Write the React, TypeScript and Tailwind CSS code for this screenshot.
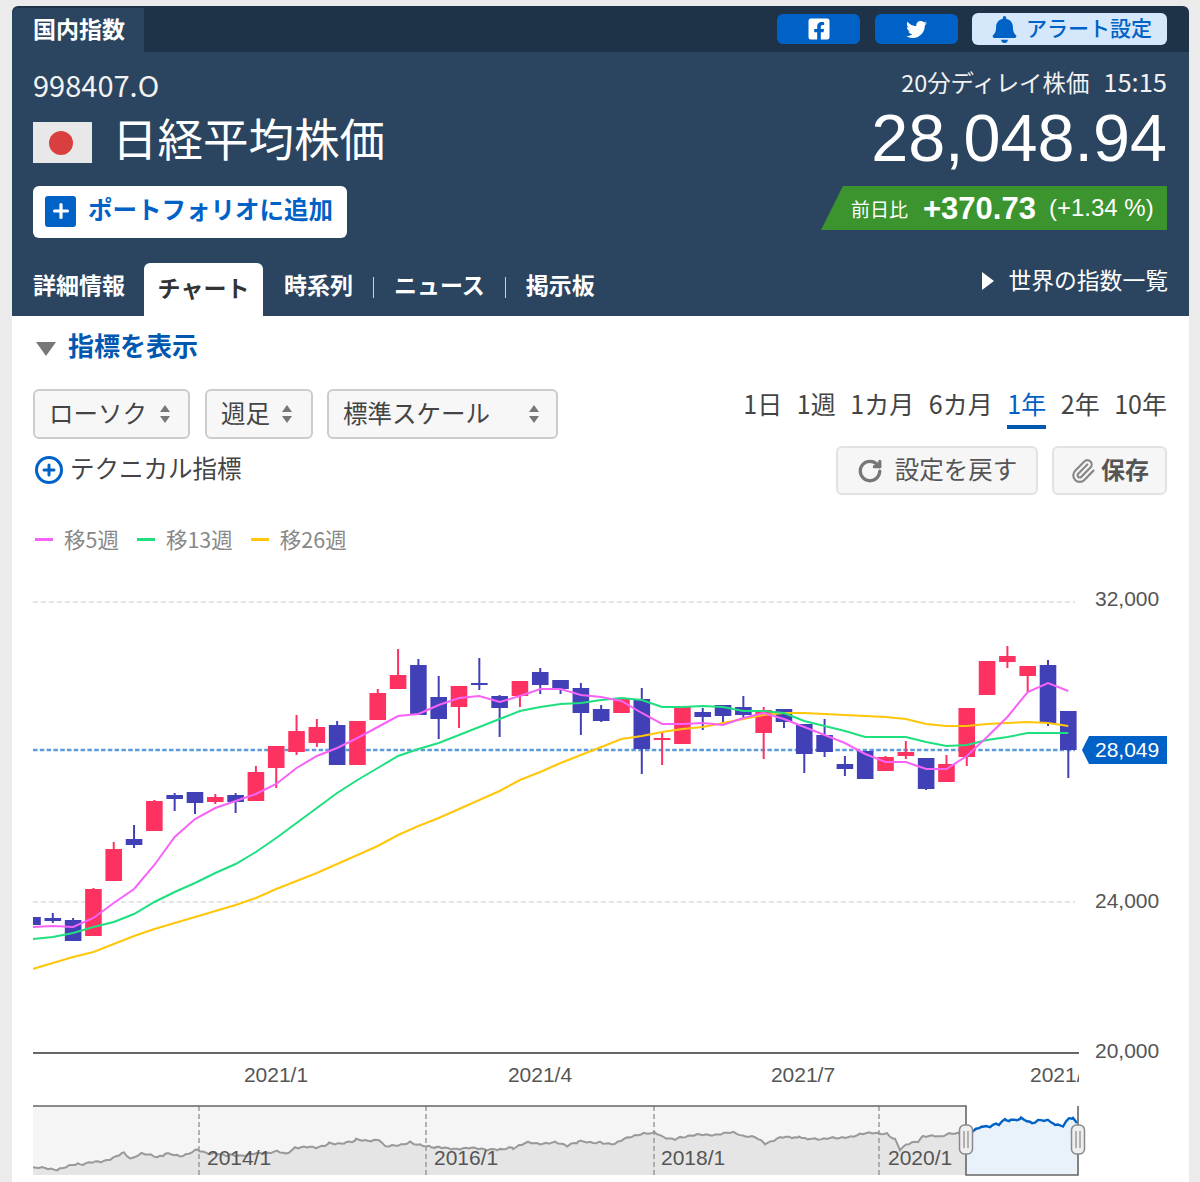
import { CirclePlus, Paperclip, Plus, RotateCw } from "lucide-react";
import { FaBell, FaFacebookSquare, FaTwitter } from "react-icons/fa";

const RED = "#fe3260";
const BLUE = "#4240b6";

// [high, body top, body bottom, low, rising]
const candles: [number, number, number, number, boolean][] = [
	[917, 917, 925, 925, false],
	[913, 918, 921, 923, false],
	[918, 920, 941, 941, false],
	[888, 889, 936, 936, true],
	[842, 849, 881, 881, true],
	[825, 839, 845, 848, false],
	[800, 801, 831, 831, true],
	[793, 795, 799, 811, false],
	[792, 792, 803, 814, false],
	[794, 797, 802, 804, true],
	[793, 795, 802, 813, false],
	[766, 772, 801, 801, true],
	[746, 746, 768, 788, true],
	[715, 731, 752, 755, true],
	[719, 727, 743, 747, true],
	[721, 725, 765, 765, false],
	[721, 721, 765, 765, true],
	[689, 693, 720, 720, true],
	[649, 675, 689, 689, true],
	[659, 665, 715, 715, false],
	[676, 697, 719, 739, false],
	[686, 686, 707, 728, true],
	[658, 683, 685, 690, false],
	[695, 696, 708, 737, false],
	[681, 681, 696, 707, true],
	[668, 672, 685, 694, false],
	[680, 680, 689, 694, false],
	[683, 688, 713, 735, false],
	[705, 709, 721, 722, false],
	[699, 699, 713, 713, true],
	[688, 699, 749, 774, false],
	[733, 738, 740, 765, true],
	[707, 707, 744, 744, true],
	[708, 712, 717, 730, false],
	[705, 705, 716, 722, false],
	[696, 707, 715, 718, false],
	[707, 710, 733, 759, true],
	[709, 709, 722, 728, false],
	[724, 724, 754, 773, false],
	[719, 735, 752, 757, false],
	[756, 764, 769, 776, false],
	[751, 751, 779, 779, false],
	[756, 757, 771, 771, true],
	[741, 752, 756, 759, true],
	[758, 758, 789, 790, false],
	[755, 764, 782, 782, true],
	[708, 708, 757, 766, true],
	[661, 661, 695, 695, true],
	[646, 656, 662, 668, true],
	[666, 666, 676, 692, true],
	[660, 665, 723, 726, false],
	[711, 711, 750, 778, false],
];

const ma5 = [927, 926, 927, 918, 903, 889, 865, 837, 819, 808, 801, 794, 784, 768, 756, 748, 738, 727, 716, 714, 705, 698, 696, 702, 696, 689, 689, 695, 697, 701, 713, 724, 724, 723, 725, 718, 713, 719, 727, 735, 743, 754, 762, 762, 769, 769, 756, 737, 717, 692, 683, 691];
const ma13 = [939, 937, 933, 927, 922, 914, 902, 892, 883, 873, 864, 852, 838, 823, 808, 793, 780, 768, 756, 749, 743, 735, 727, 719, 711, 707, 704, 703, 700, 698, 700, 707, 707, 706, 707, 711, 711, 713, 721, 726, 731, 737, 737, 737, 742, 746, 745, 740, 737, 733, 733, 733];
const ma26 = [969, 963, 957, 952, 944, 936, 929, 923, 917, 911, 905, 898, 889, 881, 873, 864, 855, 846, 835, 826, 818, 809, 800, 791, 780, 772, 763, 755, 747, 739, 736, 732, 729, 727, 723, 719, 715, 713, 713, 714, 715, 716, 717, 719, 724, 726, 726, 724, 723, 722, 723, 726];

const candleX = (i: number) => 32.5 + i * 20.31;
const linePoints = (values: number[]) =>
	values.map((y, i) => `${candleX(i)},${y}`).join(" ");

const navGrayBase: [number, number][] = [
	[33, 1168], [57, 1169], [80, 1164], [101, 1162], [124, 1153], [132, 1159], [142, 1154], [157, 1157],
	[165, 1154], [180, 1156], [197, 1150], [214, 1154], [230, 1155], [245, 1155], [268, 1153], [277, 1152],
	[286, 1154], [295, 1147], [316, 1148], [329, 1143], [346, 1143], [356, 1140], [379, 1140], [386, 1147],
	[411, 1142], [426, 1147], [436, 1148], [497, 1149], [513, 1148], [528, 1143], [555, 1143], [568, 1146],
	[578, 1142], [600, 1142], [615, 1144], [632, 1136], [654, 1133], [663, 1137], [677, 1139], [688, 1136],
	[734, 1133], [743, 1137], [755, 1136], [765, 1143], [780, 1138], [799, 1137], [809, 1139], [830, 1138],
	[839, 1139], [860, 1134], [887, 1133], [895, 1140], [900, 1149], [906, 1145], [918, 1142], [923, 1136],
	[941, 1137], [946, 1134], [960, 1134], [967, 1133],
];
const navBlueBase: [number, number][] = [
	[967, 1133], [973, 1130], [983, 1126], [990, 1126], [996, 1123], [999, 1124], [1006, 1119], [1011, 1121],
	[1021, 1119], [1032, 1123], [1038, 1121], [1048, 1121], [1055, 1125], [1063, 1126], [1069, 1117], [1073, 1118],
	[1077, 1123],
];

// the long range line is noisy, add some wobble between the traced points
const roughen = (pts: [number, number][]) => {
	const out: [number, number][] = [];
	for (let i = 0; i < pts.length - 1; i++) {
		const [x0, y0] = pts[i];
		const [x1, y1] = pts[i + 1];
		for (let x = x0; x < x1; x += 3) {
			const y = y0 + ((y1 - y0) * (x - x0)) / (x1 - x0);
			out.push([x, y + Math.sin(x * 1.9) * 0.8 + Math.sin(x * 0.7) * 0.7]);
		}
	}
	out.push(pts[pts.length - 1]);
	return out;
};
const navGray = roughen(navGrayBase);
const navBlue = roughen(navBlueBase);
const toPoints = (pts: [number, number][]) => pts.map(([x, y]) => `${x},${y}`).join(" ");

function Stepper() {
	return (
		<svg width="12" height="20" viewBox="0 0 12 20" className="shrink-0">
			<path d="M6 1 L11 8 H1 Z M6 19 L11 12 H1 Z" fill="#777" />
		</svg>
	);
}

function SelectBox({ label, className }: { label: string; className: string }) {
	return (
		<div
			className={`flex h-[50px] items-center justify-between rounded-md border-2 border-[#ccc] bg-[#f7f7f7] pl-[14px] text-[24.5px] leading-none text-[#444] ${className}`}
		>
			<span className="pb-[1px]">{label}</span>
			<Stepper />
		</div>
	);
}

function Legend({ color, label }: { color: string; label: string }) {
	return (
		<div className="flex items-center gap-[11px]">
			<span className="h-[3px] w-[18px]" style={{ backgroundColor: color }} />
			<span>{label}</span>
		</div>
	);
}

function Handle({ x }: { x: number }) {
	return (
		<g>
			<rect x={x - 6.5} y={1125} width={13} height={29} rx={5} fill="#eee" stroke="#8a8a8a" strokeWidth={1.5} />
			<path d={`M${x - 2} 1131 V1148 M${x + 2} 1131 V1148`} stroke="#8a8a8a" strokeWidth={1.2} />
		</g>
	);
}

function Chart() {
	const axisText = "#555";
	return (
		<svg width="1177" height="617" viewBox="12 565 1177 617" className="block" fontFamily="'Liberation Sans', sans-serif">
			<defs>
				<clipPath id="plot">
					<rect x="33" y="565" width="1046" height="540" />
				</clipPath>
			</defs>

			<path d="M33 602 H1075 M33 902 H1075" stroke="#ddd" strokeWidth="1.6" strokeDasharray="5 3" />
			<path d="M33 750 H1075" stroke="#5b9bdc" strokeWidth="2.4" strokeDasharray="4.5 2.3" />

			<g clipPath="url(#plot)">
				{candles.map(([high, top, bottom, low, rising], i) => {
					const x = candleX(i);
					const color = rising ? RED : BLUE;
					return (
						<g key={i}>
							<path d={`M${x} ${high} V${low}`} stroke={color} strokeWidth="2" />
							<rect x={x - 8.3} y={top} width="16.6" height={bottom - top} fill={color} />
						</g>
					);
				})}
				<polyline points={linePoints(ma26)} fill="none" stroke="#ffc60a" strokeWidth="2" />
				<polyline points={linePoints(ma13)} fill="none" stroke="#1ee07f" strokeWidth="2" />
				<polyline points={linePoints(ma5)} fill="none" stroke="#f763f7" strokeWidth="2" />
				<text x="1030" y="1082" fontSize="21" fill={axisText}>2021/10</text>
			</g>

			<path d="M33 1053 H1079" stroke="#666" strokeWidth="2" />

			<text x="1095" y="606" fontSize="21" fill={axisText}>32,000</text>
			<text x="1095" y="908" fontSize="21" fill={axisText}>24,000</text>
			<text x="1095" y="1058" fontSize="21" fill={axisText}>20,000</text>

			<path d="M1082 750 L1089 736 H1167 V764 H1089 Z" fill="#0062c7" />
			<text x="1095" y="757" fontSize="21" fill="#fff">28,049</text>

			<text x="276" y="1082" fontSize="21" fill={axisText} textAnchor="middle">2021/1</text>
			<text x="540" y="1082" fontSize="21" fill={axisText} textAnchor="middle">2021/4</text>
			<text x="803" y="1082" fontSize="21" fill={axisText} textAnchor="middle">2021/7</text>

			{/* navigator */}
			<rect x="33" y="1106" width="933" height="69" fill="#f5f5f5" />
			<polygon points={`33,1175 ${toPoints(navGray)} 967,1175`} fill="#e5e5e5" />
			<rect x="966" y="1106" width="112" height="69" fill="#fff" />
			<polygon points={`967,1175 ${toPoints(navBlue)} 1078,1175`} fill="#e9f2fb" />
			<path d="M199 1106 V1175 M426 1106 V1175 M654 1106 V1175 M879 1106 V1175" stroke="#888" strokeWidth="1.2" strokeDasharray="5 3" />
			<polyline points={toPoints(navGray)} fill="none" stroke="#999" strokeWidth="2" />
			<polyline points={toPoints(navBlue)} fill="none" stroke="#0062c7" strokeWidth="2.4" />
			<path d="M33 1106 H966 V1175 H1078 V1106" fill="none" stroke="#666" strokeWidth="1.6" />
			<text x="207" y="1165" fontSize="21" fill={axisText}>2014/1</text>
			<text x="434" y="1165" fontSize="21" fill={axisText}>2016/1</text>
			<text x="661" y="1165" fontSize="21" fill={axisText}>2018/1</text>
			<text x="888" y="1165" fontSize="21" fill={axisText}>2020/1</text>
			<Handle x={966} />
			<Handle x={1078} />
		</svg>
	);
}

export default function App() {
	return (
		<div className="h-[1182px] overflow-hidden bg-[#ebebeb] pt-[6px] pl-[12px] font-['Noto_Sans_CJK_JP','Noto_Sans',sans-serif]">
			<div className="w-[1177px] overflow-hidden rounded-t-md bg-white">
				{/* top strip */}
				<div className="flex h-[46px] justify-between bg-[#1e3248] pr-[22px]">
					<div className="mt-[2px] flex w-[132px] items-center rounded-tl-md bg-[#2b4560] pb-[4px] pl-[21px] text-[23px] leading-none font-bold text-white">
						国内指数
					</div>
					<div className="flex items-center">
						<button className="flex h-[30px] w-[83px] items-center justify-center rounded-md bg-[#0062c7] text-white">
							<FaFacebookSquare size={24} />
						</button>
						<button className="ml-[15px] flex h-[30px] w-[83px] items-center justify-center rounded-md bg-[#0062c7] text-white">
							<FaTwitter size={21} />
						</button>
						<button className="ml-[14px] flex h-[32px] w-[195px] items-center gap-[8px] rounded-md bg-[#d5e8fb] pl-[19px] text-[21px] leading-none font-medium text-[#0062c7]">
							<FaBell size={27} />
							<span className="pb-[4px]">アラート設定</span>
						</button>
					</div>
				</div>

				{/* symbol panel */}
				<div className="h-[264px] bg-[#2b4560] text-white">
					<div className="flex h-[211px] justify-between pr-[22px] pl-[21px]">
						<div>
							<div className="pt-[17px] text-[29px] leading-[30px] text-[#f2f2f2]">998407.O</div>
							<div className="mt-[16px] flex h-[50px] items-start gap-[20px]">
								<div className="mt-[7px] flex h-[41px] w-[59px] items-center justify-center bg-[#e8e8e8] pr-[3px]">
									<span className="h-[24px] w-[24px] rounded-full bg-[#d93f3f]" />
								</div>
								<h1 className="-mt-[3px] text-[45.5px] leading-[50px] font-normal">日経平均株価</h1>
							</div>
							<button className="mt-[21px] flex h-[52px] w-[314px] items-center gap-[12px] rounded-md bg-white pl-[12px] text-[24.5px] leading-none font-bold text-[#0062c7]">
								<span className="mb-[2px] flex h-[31px] w-[31px] items-center justify-center rounded-[3px] bg-[#0062c7] text-white">
									<Plus size={22} strokeWidth={3.5} />
								</span>
								<span className="pb-[6px]">ポートフォリオに追加</span>
							</button>
						</div>
						<div className="flex flex-col items-end">
							<div className="flex items-baseline gap-[14px] pt-[14px] text-[23.4px] leading-[30px] text-[#f2f2f2]">
								<span>20分ディレイ株価</span>
								<span className="text-[25.5px]">15:15</span>
							</div>
							<div className="mt-[6px] font-['Liberation_Sans',sans-serif] text-[66.5px] leading-[70px]">28,048.94</div>
							<div className="mt-[13px] flex h-[44px] w-[346px] items-center bg-[#3b942d] pl-[30px] [clip-path:polygon(22px_0,100%_0,100%_100%,0_100%)]">
								<span className="text-[19px] leading-none">前日比</span>
								<span className="ml-[15px] font-['Liberation_Sans',sans-serif] text-[31px] leading-none font-bold">+370.73</span>
								<span className="ml-[13px] font-['Liberation_Sans',sans-serif] text-[24px] leading-none">(+1.34 %)</span>
							</div>
						</div>
					</div>
					<div className="flex h-[53px] items-end justify-between pr-[21px] pl-[21px]">
						<div className="flex h-[53px] items-center text-[23px] leading-none font-bold">
							<span className="pb-[11px]">詳細情報</span>
							<span className="ml-[19px] flex h-[53px] w-[119px] items-center justify-center rounded-t-md bg-white pb-[5px] text-[#333]">チャート</span>
							<span className="ml-[21px] pb-[11px]">時系列</span>
							<span className="mx-[20px] mb-[4px] h-[21px] w-px bg-[#ccd]" />
							<span className="pb-[11px]">ニュース</span>
							<span className="mx-[20px] mb-[4px] h-[21px] w-px bg-[#ccd]" />
							<span className="pb-[11px]">掲示板</span>
						</div>
						<div className="flex h-[46px] items-start gap-[14px] text-[22.8px] leading-none">
							<svg width="12" height="18" viewBox="0 0 12 18" className="mt-[2px]">
								<path d="M0 0 L12 9 L0 18 Z" fill="#fff" />
							</svg>
							<span className="-mt-[1px]">世界の指数一覧</span>
						</div>
					</div>
				</div>

				{/* controls */}
				<div className="pt-[12px]">
					<div className="flex items-center gap-[12px] pl-[24px]">
						<svg width="20" height="14" viewBox="0 0 20 14" className="mt-[3px]">
							<path d="M0 0 H20 L10 14 Z" fill="#777" />
						</svg>
						<span className="mb-[4px] text-[26px] leading-[34px] font-bold text-[#0058b0]">指標を表示</span>
					</div>
					<div className="mt-[23px] flex justify-between pr-[22px] pl-[21px]">
						<div className="flex gap-[14px]">
							<SelectBox label="ローソク" className="mr-px w-[157px] pr-[17px]" />
							<SelectBox label="週足" className="w-[108px] pr-[18px]" />
							<SelectBox label="標準スケール" className="w-[231px] pr-[16px]" />
						</div>
						<div className="flex gap-[14.6px] text-[25px] leading-[28px] text-[#444]">
							<span>1日</span>
							<span>1週</span>
							<span>1カ月</span>
							<span>6カ月</span>
							<span className="h-[40px] border-b-4 border-[#0058b0] text-[#0062c7]">1年</span>
							<span>2年</span>
							<span>10年</span>
						</div>
					</div>
					<div className="mt-[7px] flex items-center justify-between pr-[22px] pl-[22px]">
						<div className="flex items-center gap-[6px] text-[24.5px] leading-none text-[#444]">
							<CirclePlus size={30} color="#0062c7" strokeWidth={2.4} className="mb-[1px]" />
							<span className="pb-[4px]">テクニカル指標</span>
						</div>
						<div className="flex gap-[14px]">
							<button className="flex h-[49px] w-[202px] items-center justify-center gap-[12px] rounded-md border-2 border-[#e2e2e2] bg-[#f6f6f6] text-[24.5px] leading-none text-[#555]">
								<RotateCw size={26} color="#777" strokeWidth={3} />
								<span className="pb-[3px]">設定を戻す</span>
							</button>
							<button className="flex h-[49px] w-[115px] items-center justify-center gap-[5px] rounded-md border-2 border-[#e2e2e2] bg-[#f6f6f6] text-[24px] leading-none font-bold text-[#555]">
								<Paperclip size={26} color="#888" />
								<span className="pb-[4px]">保存</span>
							</button>
						</div>
					</div>
					<div className="mt-[29px] flex gap-[18px] pl-[23px] text-[21.5px] leading-[30px] text-[#888]">
						<Legend color="#f763f7" label="移5週" />
						<Legend color="#1ee07f" label="移13週" />
						<Legend color="#ffc60a" label="移26週" />
					</div>
				</div>

				<div className="pt-[11px]">
					<Chart />
				</div>
			</div>
		</div>
	);
}
